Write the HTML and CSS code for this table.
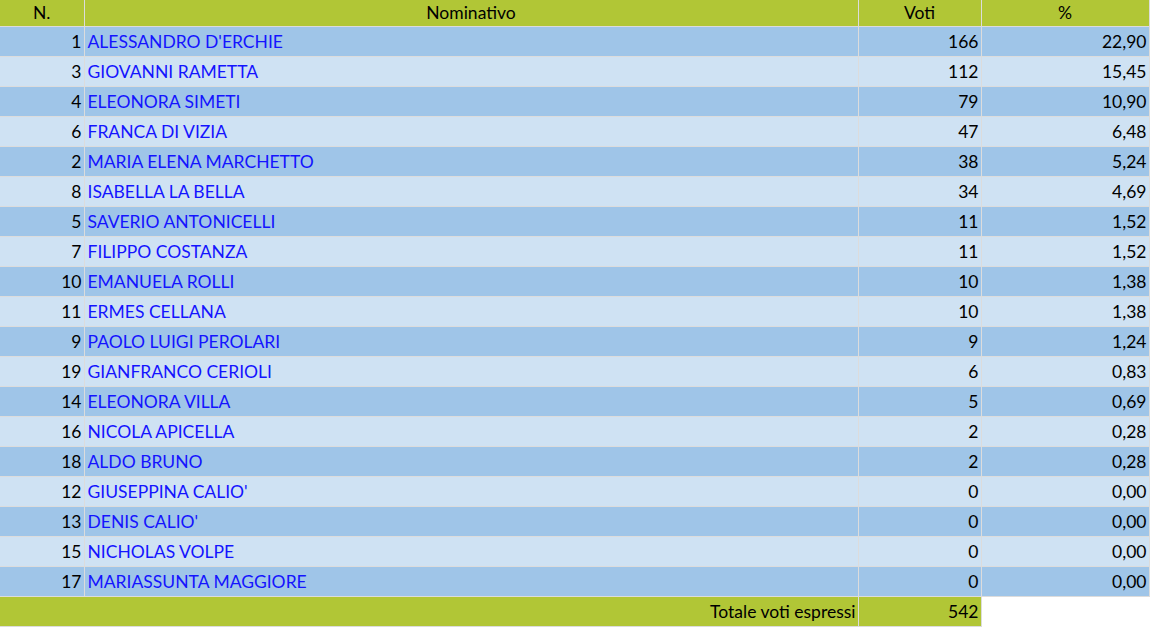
FILE: index.html
```html
<!DOCTYPE html>
<html lang="it">
<head>
<meta charset="utf-8">
<title>Risultati</title>
<link rel="stylesheet" href="styles.css">
</head>
<body>
<table class="results">
  <colgroup>
    <col class="c-n"><col class="c-name"><col class="c-voti"><col class="c-pct">
  </colgroup>
  <thead>
    <tr class="head"><th>N.</th><th>Nominativo</th><th>Voti</th><th>%</th></tr>
  </thead>
  <tbody>
    <tr class="dark"><td class="num">1</td><td class="name"><a href="#">ALESSANDRO D'ERCHIE</a></td><td class="num">166</td><td class="num">22,90</td></tr>
    <tr class="light"><td class="num">3</td><td class="name"><a href="#">GIOVANNI RAMETTA</a></td><td class="num">112</td><td class="num">15,45</td></tr>
    <tr class="dark"><td class="num">4</td><td class="name"><a href="#">ELEONORA SIMETI</a></td><td class="num">79</td><td class="num">10,90</td></tr>
    <tr class="light"><td class="num">6</td><td class="name"><a href="#">FRANCA DI VIZIA</a></td><td class="num">47</td><td class="num">6,48</td></tr>
    <tr class="dark"><td class="num">2</td><td class="name"><a href="#">MARIA ELENA MARCHETTO</a></td><td class="num">38</td><td class="num">5,24</td></tr>
    <tr class="light"><td class="num">8</td><td class="name"><a href="#">ISABELLA LA BELLA</a></td><td class="num">34</td><td class="num">4,69</td></tr>
    <tr class="dark"><td class="num">5</td><td class="name"><a href="#">SAVERIO ANTONICELLI</a></td><td class="num">11</td><td class="num">1,52</td></tr>
    <tr class="light"><td class="num">7</td><td class="name"><a href="#">FILIPPO COSTANZA</a></td><td class="num">11</td><td class="num">1,52</td></tr>
    <tr class="dark"><td class="num">10</td><td class="name"><a href="#">EMANUELA ROLLI</a></td><td class="num">10</td><td class="num">1,38</td></tr>
    <tr class="light"><td class="num">11</td><td class="name"><a href="#">ERMES CELLANA</a></td><td class="num">10</td><td class="num">1,38</td></tr>
    <tr class="dark"><td class="num">9</td><td class="name"><a href="#">PAOLO LUIGI PEROLARI</a></td><td class="num">9</td><td class="num">1,24</td></tr>
    <tr class="light"><td class="num">19</td><td class="name"><a href="#">GIANFRANCO CERIOLI</a></td><td class="num">6</td><td class="num">0,83</td></tr>
    <tr class="dark"><td class="num">14</td><td class="name"><a href="#">ELEONORA VILLA</a></td><td class="num">5</td><td class="num">0,69</td></tr>
    <tr class="light"><td class="num">16</td><td class="name"><a href="#">NICOLA APICELLA</a></td><td class="num">2</td><td class="num">0,28</td></tr>
    <tr class="dark"><td class="num">18</td><td class="name"><a href="#">ALDO BRUNO</a></td><td class="num">2</td><td class="num">0,28</td></tr>
    <tr class="light"><td class="num">12</td><td class="name"><a href="#">GIUSEPPINA CALIO'</a></td><td class="num">0</td><td class="num">0,00</td></tr>
    <tr class="dark"><td class="num">13</td><td class="name"><a href="#">DENIS CALIO'</a></td><td class="num">0</td><td class="num">0,00</td></tr>
    <tr class="light"><td class="num">15</td><td class="name"><a href="#">NICHOLAS VOLPE</a></td><td class="num">0</td><td class="num">0,00</td></tr>
    <tr class="dark"><td class="num">17</td><td class="name"><a href="#">MARIASSUNTA MAGGIORE</a></td><td class="num">0</td><td class="num">0,00</td></tr>
  </tbody>
  <tfoot>
    <tr class="total"><td class="num" colspan="2">Totale voti espressi</td><td class="num">542</td><td class="blank"></td></tr>
  </tfoot>
</table>
</body>
</html>
```

FILE: styles.css
```css
html, body {
  margin: 0;
  padding: 0;
  background: #ffffff;
}

body {
  font-family: Lato, "Liberation Sans", sans-serif;
  font-size: 17.5px;
  color: #000;
}

.results {
  border-collapse: collapse;
  table-layout: fixed;
  width: 1149px;
}

.c-n { width: 84px; }
.c-name { width: 774px; }
.c-voti { width: 123px; }
.c-pct { width: 168px; }

.results th,
.results td {
  border-right: 1px solid #dcdcdc;
  border-bottom: 1px solid #dcdcdc;
  padding: 0 2px 0 3px;
  white-space: nowrap;
  overflow: hidden;
}

.results th {
  height: 26px;
  font-weight: normal;
  text-align: center;
  background: #b1c636;
  line-height: 26px;
}

.results td {
  height: 28px;
  line-height: 28px;
  padding-top: 1px;
}

.head th {
  padding: 0;
}

.dark td { background: #9fc5e8; }
.light td { background: #cfe2f3; }

.num { text-align: right; }
.name { text-align: left; }

.name a {
  color: #1414ff;
  text-decoration: none;
}

.total td {
  background: #b1c636;
}

.total td.blank {
  background: transparent;
  border: none;
}
```
